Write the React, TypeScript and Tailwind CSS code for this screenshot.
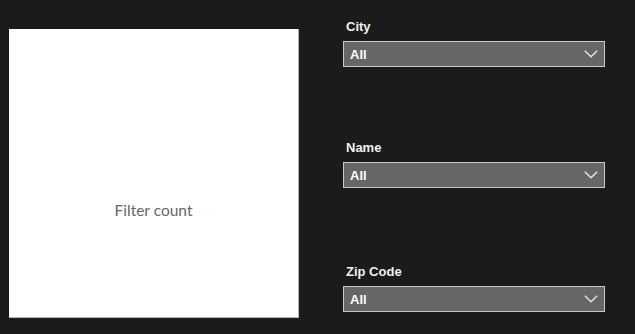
import React from 'react';

const filters = ['City', 'Name', 'Zip Code'];

function Chevron() {
  return (
    <svg width="14" height="8" viewBox="0 0 14 8" fill="none" className="shrink-0">
      <polyline points="0.8,0.8 7,6.8 13.2,0.8" stroke="#e6e6e6" strokeWidth="1.4" />
    </svg>
  );
}

function Slicer({ label, className }: { label: string; className?: string }) {
  return (
    <div className={`flex flex-col ${className ?? ''}`}>
      <div className="pl-[3px] h-[16px] leading-[16px] text-[13px] font-bold text-[#f0f0f0] mb-[6px]">
        {label}
      </div>
      <div className="w-[262px] h-[26px] border border-[#c8c8c8] bg-[#666666] flex items-center justify-between pl-[6px] pr-[6px]">
        <span className="text-[13px] font-bold text-white leading-[20px] pt-[2px]">All</span>
        <Chevron />
      </div>
    </div>
  );
}

export default function App() {
  return (
    <div
      className="w-[635px] h-[334px] bg-[#1b1b1b] flex overflow-hidden"
      style={{ fontFamily: '"Liberation Sans", Arial, sans-serif' }}
    >
      {/* Card visual */}
      <div className="ml-[9px] mt-[29px] w-[290px] h-[289px] bg-white border-r border-b border-[#b4b4b4] flex justify-center pt-[171px]">
        <span
          className="text-[15.5px] leading-[20px] text-[#666666]"
          style={{ fontFamily: 'Lato, "Open Sans", sans-serif' }}
        >
          Filter count
        </span>
      </div>

      {/* Slicers */}
      <div className="ml-[44px] pt-[19px] flex flex-col">
        <Slicer label={filters[0]} />
        <Slicer label={filters[1]} className="mt-[73px]" />
        <Slicer label={filters[2]} className="mt-[76px]" />
      </div>
    </div>
  );
}
